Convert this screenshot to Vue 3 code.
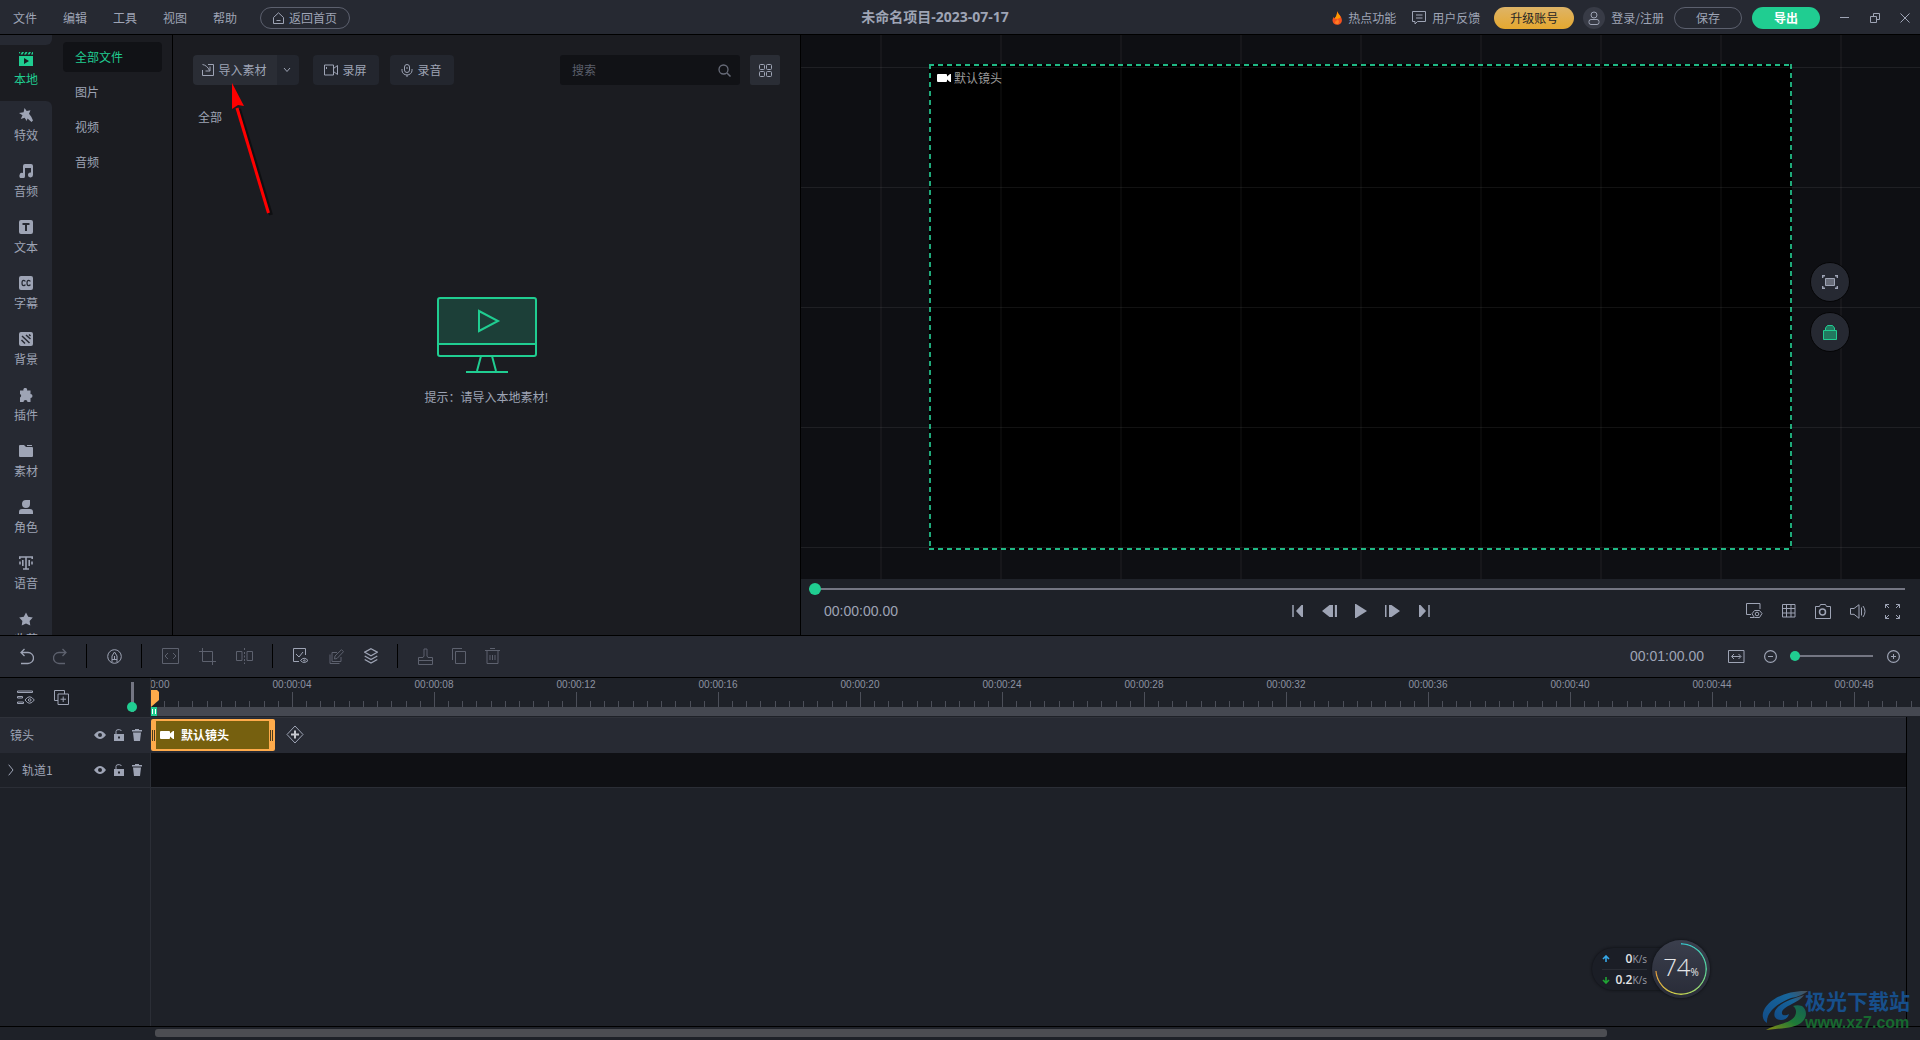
<script setup>
import { h, ref } from 'vue'

// name: [width, height, markup]
const icons = {
  home: [11, 12, '<path d="M.5 5.5 5.5.8l5 4.7v6H.5zM3.5 8.5h4"/>'],
  flame: [11, 14, '<path d="M5 .3c.6 2.2 4.7 4.600 4.900 8.600.1 2.900-2 4.900-4.600 4.900S.6 12.200.5 9.500c0-1.700.7-2.600 1.200-3.600.5.5.7 1 .8 1.600C4.300 5.700 5.300 3 5 .3z" fill="#f4511e" stroke="none"/><path d="M5 .3c.6 2.200 3 3.600 3.600 6C7 8 4 8 2.500 7.500 4.300 5.700 5.300 3 5 .3z" fill="#ff9800" stroke="none"/><path d="M5.600 8c1.800 1.500 2 5-.4 5.200-2.600 0-2.800-2.400-1-3.400.8-.5 1.300-1 1.400-1.800z" fill="#ff7b21" stroke="none"/>'],
  feedback: [14, 14, '<path d="M.5.5h13v10H5.500l-2.500 2.500v-2.500H.5zM4 4h6.500M4 7h6.500"/>'],
  user: [12, 14, '<circle cx="6" cy="4" r="3"/><rect x="1" y="8.500" width="10" height="5" rx="2"/>'],
  min: [10, 10, '<path d="M0 4.500h9"/>'],
  restore: [10, 10, '<path d="M.5 3.500h6v6h-6zM3.500 3V.5h6v6H7"/>'],
  close: [10, 10, '<path d="M.5.5l9 9M9.500.5l-9 9"/>'],
  local: [14, 14, '<path d="M0 0h1.500L0 2zM3 0h2L3.500 2.500h-2zM6.500 0h2L7 2.500H5zM10 0h2l-1.500 2.500h-2zM13.300 0H14v2.500h-2zM0 4h14v10H0zM5 6v6l5-3z" fill="currentColor" fill-rule="evenodd" stroke="none"/>'],
  effect: [14, 14, '<path d="M5.500 0l2.200 3 3.800-.8-1.500 3.500 2.300 3L14 12.500 12.500 14 8.500 10.500l-.7 2.500L5.600 9.800 1.800 10.900l1.700-3.700L0 4.900l4.600-.6z" fill="currentColor" stroke="none"/>'],
  music: [14, 14, '<path d="M4 2Q4 0 6 0h6q2 0 2 2v9a2.500 2.500 0 1 1-2-2.500V4H6v7.500A2.800 2.800 0 1 1 4 9z" fill="currentColor" stroke="none"/>'],
  text: [14, 14, '<path d="M2 0h10q2 0 2 2v10q0 2-2 2H2q-2 0-2-2V2q0-2 2-2zM3.500 3v2H6v6h2V5h2.500V3z" fill="currentColor" fill-rule="evenodd" stroke="none"/>'],
  cc: [14, 14, '<rect width="14" height="14" rx="2" fill="currentColor" stroke="none"/><path d="M6.300 5.500Q6 4.300 4.700 4.300 3 4.300 3 7t1.700 2.700Q6 9.700 6.300 8.500M11.300 5.500Q11 4.300 9.700 4.300 8 4.300 8 7t1.700 2.700q1.300 0 1.600-1.200" stroke="#262932" stroke-width="1.200"/>'],
  background: [14, 14, '<rect width="14" height="14" rx="2" fill="currentColor" stroke="none"/><path d="M3 4l7.500 7M7 3l4.500 4M2.500 8L6 11.500M10 2.500l1.500 1.500" stroke="#262932" stroke-width="1.500"/>'],
  plugin: [14, 14, '<path d="M1 2.500h3.500a1.900 1.900 0 1 1 3.500 0h3.500V6a2 2 0 1 1 0 4v4H8.500a2 2 0 0 0-4 0H1V9.500a1.900 1.900 0 0 0 0-3.500z" fill="currentColor" stroke="none"/>'],
  folder: [14, 14, '<path d="M0 2q0-1 1-1h4l2 2h6q1 0 1 1v8q0 1-1 1H1q-1 0-1-1zM8 1h5v1H8z" fill="currentColor" stroke="none"/>'],
  role: [14, 14, '<path d="M7 0h4v4a4 4 0 1 1-4-4zM3 9h8q3 0 3 3v2H0v-2q0-3 3-3z" fill="currentColor" stroke="none"/>'],
  voice: [14, 14, '<path d="M.8 3V1h12.400v2M7 1v12M4 13h6M3.800 4v6M10.200 4v6M1 5.500v3M13 5.500v3" stroke-width="1.600"/>'],
  star: [14, 14, '<path d="M7 .5l2.200 4.200 4.600.8-3.200 3.400.7 4.700L7 11.500l-4.300 2.100.7-4.700L.2 5.500l4.600-.8z" fill="currentColor" stroke="none"/>'],
  importIn: [12, 12, '<path d="M6 .5h5.500v11H.5V6M.5.5C3.500 1 6 3 7.500 6.500M8 2.500v4.500H3.500"/>'],
  caret: [8, 6, '<path d="M1 1l3 3.500L7 1"/>'],
  camera: [14, 12, '<path d="M.5 1h9v10h-9zM9.500 4.500l4-3v9l-4-3M2.500 3v2"/>'],
  mic: [12, 13, '<rect x="3.500" y=".5" width="5" height="8" rx="2.500"/><path d="M1 5v1.500a5 4.500 0 0 0 10 0V5M6 11v2M6 3v2"/>'],
  search: [13, 13, '<circle cx="5.500" cy="5.500" r="4.500" stroke-width="1.300"/><path d="M9 9l3.500 3.500" stroke-width="1.500"/>'],
  grid4: [13, 13, '<rect x=".5" y=".5" width="5" height="5" rx="1"/><rect x="7.500" y=".5" width="5" height="5" rx="1"/><rect x=".5" y="7.500" width="5" height="5" rx="1"/><rect x="7.500" y="7.500" width="5" height="5" rx="1"/>'],
  monitor: [100, 76, '<path d="M1 1h98v46H1z" fill="#1c3f38" stroke="none"/><rect x="1" y="1" width="98" height="58" rx="2" stroke-width="2"/><path d="M1 47h98M42 14v20l19-10zM44 59l-4 15M55 59l4 15M29 75h42" stroke-width="2"/>'],
  cam: [14, 10, '<path d="M0 2q0-1 1-1h8q1 0 1 1v1.500L13 1h1v8h-1l-3-2.500V8q0 1-1 1H1Q0 9 0 8z" fill="currentColor" stroke="none"/>'],
  fitBox: [16, 14, '<path d="M3.500 3.500h9v7h-9z" fill="#686c78"/><path d="M.7 3V.7H3M13 .7h2.300V3M15.300 11v2.300H13M3 13.300H.7V11" stroke-width="1.400"/>'],
  padlock: [14, 15, '<path d="M.5 5.500h13v9H.5zM2.500 5.500V3l2-2.500h5l2 2.500v2.500" fill="#22795f" stroke="#20cd91"/>'],
  first: [12, 14, '<path d="M1 1v12" stroke-width="1.500"/><path d="M11 1v12H9.500L4 7l5.500-6z" fill="currentColor" stroke="none"/>'],
  prev: [15, 14, '<path d="M0 7l7.500-6H11v12H7.500zM12.500 1H15v12h-2.500z" fill="currentColor" stroke="none"/><path d="M12 1v12" stroke="#1e2128" stroke-width="1.400"/>'],
  play: [12, 14, '<path d="M0 0h1l11 7-11 7H0z" fill="currentColor" stroke="none"/>'],
  next: [15, 14, '<path d="M0 1h1.500v12H0zM4 1h2.500L15 7l-8.500 6H4z" fill="currentColor" stroke="none"/>'],
  last: [12, 14, '<path d="M11 1v12" stroke-width="1.500"/><path d="M1 1v12h1.500L8 7 2.500 1z" fill="currentColor" stroke="none"/>'],
  screenSet: [17, 16, '<path d="M5 11.500H.5V.5h13.500V6M4 14.500h4"/><path d="M8.500 7.500h5l2.500 3-2.500 4h-5L6 10.800z"/><circle cx="11" cy="11" r="1.800"/>'],
  gridLines: [14, 14, '<path d="M.5.5h12.500v12.500H.5zM4.500.5v12.500M9 .5v12.500M.5 4.500h12.500M.5 9h12.500"/>'],
  photo: [16, 15, '<path d="M.5 2.500h4l1-2h5l1 2h4v12H.5z"/><circle cx="7.500" cy="8" r="3" stroke-width="1.500"/>'],
  speaker: [16, 15, '<path d="M.5 4.500H4L9 .7v13.600l-5-4H.5zM11.500 3.500v8M13 2q4 5.500 0 11"/>'],
  expand: [15, 15, '<path d="M.5 4V.5H4M.5.5 4 4M11 .5h3.500V4M14.500.5 11 4M14.500 11v3.500H11M14.500 14.500 11 11M4 14.500H.5V11M.5 14.500 4 11"/>'],
  undo: [14, 17, '<path d="M1 4.500h7a5.500 5.500 0 0 1 0 11H1M4.500 1L1 4.500 4.500 8" stroke-width="1.300"/>'],
  redo: [14, 17, '<path d="M13 4.500H6a5.500 5.500 0 0 0 0 11h6M9.500 1L13 4.500 9.500 8" stroke-width="1.300"/>'],
  auto: [15, 15, '<circle cx="7.500" cy="7.500" r="6.800"/><path d="M5 13V7l2.500-4L10 7v6M5 10.500h5M7.500 7v3"/>'],
  code: [17, 16, '<path d="M.5.5h16v15H.5zM6 5L3 8l3 3M11 5l3 3-3 3"/>'],
  crop: [17, 17, '<path d="M0 3.500h13.500V17M3.500 0v13.500H17"/>'],
  split: [17, 16, '<path d="M6 3.500H.5v9H6zM11 3.500h5.500v9H11zM8.500 0v2M8.500 4v2M8.500 7.500v2M8.500 11v2M8.500 14.500V16"/>'],
  checkEye: [16, 16, '<path d="M12.500 7V.5H.5v13H6M3 6l3 3 4-5"/><path d="M7.500 12.500q3.500-4.500 7.500 0-4 4-7.500 0z"/><circle cx="11.300" cy="12.500" r=".7"/>'],
  edit: [15, 15, '<path d="M8 3.500H3v9h9V8M1 5.500v9h9.500M5.500 10l.5-3L12.500.7l2 2L8 9.500z"/>'],
  layers: [14, 16, '<path d="M7 .7l6.300 3.500L7 7.700.7 4.200zM.7 8L7 11.500 13.300 8M.7 11.500L7 15l6.300-3.500" stroke-width="1.300"/>'],
  stamp: [15, 17, '<path d="M.5 16.500v-7H5L6 8V1h3v7l1 1.500h4.500v7zM.5 12.500h14"/>'],
  copy: [14, 16, '<path d="M3.500 3.500h10v12h-10zM.5 12V.5H10"/>'],
  trashLine: [15, 16, '<path d="M0 2.500h15M5 .5h5M2 3v12.500h11V3M5 7v5M7.500 7v5M10 7v5"/>'],
  fitWidth: [17, 13, '<path d="M.5.5h15.500v12H.5zM4 6.500h8.500M6 4L3.500 6.500 6 9M10.500 4 13 6.500 10.500 9"/>'],
  minus: [13, 13, '<circle cx="6.500" cy="6.500" r="5.900" stroke-width="1.200"/><path d="M4 6.500h5"/>'],
  plus: [13, 13, '<circle cx="6.500" cy="6.500" r="5.900" stroke-width="1.200"/><path d="M4 6.500h5M6.500 4v5"/>'],
  trackSet: [18, 15, '<path d="M.5 1h15v1.500H.5zM.5 6.500h5v1.500h-5zM.5 12h6v1.500h-6zM8 10q4.500-6.500 9.300 0-4.800 6.500-9.300 0z"/><circle cx="12.700" cy="10" r="1.300"/>'],
  addTrack: [15, 15, '<path d="M4 4h10.500v10.500H4zM4 10.500H.5V.5h10V4M9.200 6.500v5.500M6.500 9.200H12"/>'],
  eye: [12, 8, '<path d="M0 4q6-8 12 0-6 8-12 0zM6 2a2 2 0 1 0 0 4 2 2 0 0 0 0-4z" fill="currentColor" fill-rule="evenodd" stroke="none"/>'],
  unlock: [10, 12, '<path d="M0 5h10v7H0zM4 7.500v2h2v-2z" fill="currentColor" fill-rule="evenodd" stroke="none"/><path d="M2 5V2.500Q2 .7 4 .7h1.500Q7 .7 7.300 2"/>'],
  trash: [10, 12, '<path d="M3 0h4v1h3v1.500H0V1h3zM1 3.500h8L8 12H2z" fill="currentColor" stroke="none"/>'],
  chevron: [6, 12, '<path d="M.7.7L5 6 .7 11.300"/>'],
  playhead: [8, 17, '<path d="M0 0h6l2 2v8l-8 7z" fill="#ffab4b" stroke="none"/>'],
  addClip: [18, 19, '<path d="M9 1l8 8.500L9 18 1 9.500z"/><path d="M9 5.500v8M5 9.500h8" stroke="#c6c8ce" stroke-width="2"/>'],
  up: [8, 7, '<path d="M4 7V1M1 4l3-3 3 3" stroke="#35a7e8" stroke-width="1.600"/>'],
  down: [8, 7, '<path d="M4 0v6M1 3l3 3 3-3" stroke="#20a534" stroke-width="1.600"/>'],
}

const Icon = ({ name }) => {
  const [w, ht, body] = icons[name]
  return h('svg', {
    class: 'icon', width: w, height: ht, viewBox: `0 0 ${w} ${ht}`,
    fill: 'none', stroke: 'currentColor', 'aria-hidden': 'true', innerHTML: body,
  })
}
Icon.props = ['name']

const menus = ['文件', '编辑', '工具', '视图', '帮助']
const modules = [
  ['local', '本地'], ['effect', '特效'], ['music', '音频'], ['text', '文本'],
  ['cc', '字幕'], ['background', '背景'], ['plugin', '插件'], ['folder', '素材'],
  ['role', '角色'], ['voice', '语音'], ['star', '收藏'],
]
const folders = ['全部文件', '图片', '视频', '音频']
const transport = [['first', '第一帧'], ['prev', '上一帧'], ['play', '播放'], ['next', '下一帧'], ['last', '最后一帧']]
const viewTools = [['screenSet', '画质'], ['gridLines', '网格'], ['photo', '截图'], ['speaker', '音量'], ['expand', '全屏']]
const toolGroups = [
  [['undo', '撤销', true], ['redo', '重做', false]],
  [['auto', '自动', true]],
  [['code', '代码', false], ['crop', '裁剪', false], ['split', '分割', false]],
  [['checkEye', '可见', true], ['edit', '编辑', false], ['layers', '图层', true]],
  [['stamp', '格式刷', false], ['copy', '复制', false], ['trashLine', '删除', false]],
]
const trackTools = [['eye', '显示'], ['unlock', '锁定'], ['trash', '删除']]
const marks = Array.from({ length: 14 }, (_, i) => '00:00:' + String(i * 4).padStart(2, '0'))
const minor = [0, 14, 28, 43, 57, 85, 99, 113, 128]

const keyword = ref('')
const position = ref(0)
const zoom = ref(0)
const trackHeight = ref(0)
</script>

<template>
  <div class="app">
    <header class="titlebar">
      <nav class="menus">
        <button v-for="m in menus" :key="m" class="menu">{{ m }}</button>
        <button class="pill back"><Icon name="home" />返回首页</button>
      </nav>
      <h1 class="project">未命名项目-2023-07-17</h1>
      <div class="account">
        <a href="#" class="hot"><Icon name="flame" />热点功能</a>
        <a href="#" class="feedback"><Icon name="feedback" />用户反馈</a>
        <button class="pill upgrade">升级账号</button>
        <a href="#" class="login"><span class="avatar"><Icon name="user" /></span>登录/注册</a>
        <button class="pill save">保存</button>
        <button class="pill export">导出</button>
        <div class="window">
          <button aria-label="最小化"><Icon name="min" /></button>
          <button aria-label="还原"><Icon name="restore" /></button>
          <button aria-label="关闭"><Icon name="close" /></button>
        </div>
      </div>
    </header>

    <main class="workspace">
      <nav class="modules">
        <div class="cap"></div>
        <button v-for="([icon, label], i) in modules" :key="icon" class="module" :class="{ active: i === 0, after: i === 1 }">
          <Icon :name="icon" /><span>{{ label }}</span>
        </button>
      </nav>
      <nav class="folders">
        <button v-for="(f, i) in folders" :key="f" class="folder" :class="{ active: i === 0 }">{{ f }}</button>
      </nav>

      <section class="media">
        <div class="media-bar">
          <div class="import">
            <button class="import-main"><Icon name="importIn" />导入素材</button>
            <button class="import-more" aria-label="更多"><Icon name="caret" /></button>
          </div>
          <button class="record"><Icon name="camera" />录屏</button>
          <button class="record voice"><Icon name="mic" />录音</button>
          <label class="search">
            <input v-model="keyword" type="text" placeholder="搜索" aria-label="搜索" />
            <Icon name="search" />
          </label>
          <button class="layout" aria-label="网格视图"><Icon name="grid4" /></button>
        </div>
        <p class="crumb">全部</p>
        <div class="empty">
          <Icon name="monitor" />
          <p>提示：请导入本地素材!</p>
        </div>
      </section>

      <section class="preview">
        <div class="stage">
          <div class="canvas">
            <p class="scene"><Icon name="cam" />默认镜头</p>
          </div>
          <div class="side">
            <button aria-label="适应"><Icon name="fitBox" /></button>
            <button aria-label="锁定"><Icon name="padlock" /></button>
          </div>
        </div>
        <div class="player">
          <input v-model="position" class="range progress" type="range" min="0" max="100" aria-label="播放进度" />
          <div class="controls">
            <time class="time">00:00:00.00</time>
            <div class="transport">
              <button v-for="[icon, label] in transport" :key="icon" :aria-label="label"><Icon :name="icon" /></button>
            </div>
            <div class="view-tools">
              <button v-for="[icon, label] in viewTools" :key="icon" :aria-label="label"><Icon :name="icon" /></button>
            </div>
          </div>
        </div>
      </section>
    </main>

    <div class="toolbar">
      <div v-for="(group, g) in toolGroups" :key="g" class="tool-group">
        <button v-for="[icon, label, on] in group" :key="icon" :aria-label="label" :class="{ off: !on }"><Icon :name="icon" /></button>
      </div>
      <div class="zoom">
        <time class="time">00:01:00.00</time>
        <button aria-label="适应宽度"><Icon name="fitWidth" /></button>
        <button aria-label="缩小"><Icon name="minus" /></button>
        <input v-model="zoom" class="range scale" type="range" min="0" max="100" aria-label="缩放" />
        <button aria-label="放大"><Icon name="plus" /></button>
      </div>
    </div>

    <section class="timeline">
      <div class="ruler-row">
        <div class="head ruler-head">
          <button aria-label="轨道设置"><Icon name="trackSet" /></button>
          <button aria-label="添加轨道"><Icon name="addTrack" /></button>
          <input v-model="trackHeight" class="range upright" type="range" min="0" max="100" aria-label="轨道高度" />
        </div>
        <div class="ruler">
          <div class="marks">
            <div v-for="m in marks" :key="m" class="mark">
              <span>{{ m }}</span>
              <svg width="142" height="15" aria-hidden="true">
                <path v-for="x in minor" :key="x" :d="`M${x}.5 9v6`" stroke="#4c4f59" />
                <path d="M71.500 0v15" stroke="#4c4f59" />
              </svg>
            </div>
          </div>
          <div class="span"><i class="marker"></i></div>
          <Icon name="playhead" class="playhead" />
        </div>
      </div>

      <div class="tracks">
        <div class="track scenes">
          <div class="head">
            <span class="name">镜头</span>
            <button v-for="[icon, label] in trackTools" :key="icon" :aria-label="label"><Icon :name="icon" /></button>
          </div>
          <div class="lane">
            <div class="clip"><Icon name="cam" />默认镜头</div>
            <button class="add" aria-label="添加镜头"><Icon name="addClip" /></button>
          </div>
        </div>
        <div class="track media-track">
          <div class="head">
            <button class="open" aria-label="展开"><Icon name="chevron" /></button>
            <span class="name">轨道1</span>
            <button v-for="[icon, label] in trackTools" :key="icon" :aria-label="label"><Icon :name="icon" /></button>
          </div>
          <div class="lane"></div>
        </div>
        <div class="blank"><div class="head"></div></div>
      </div>
      <div class="scroll"><div class="thumb"></div></div>
    </section>

    <svg class="pointer" width="60" height="140" viewBox="0 0 60 140" aria-hidden="true">
      <path d="M17 25L49 131" stroke="#000" stroke-opacity=".45" stroke-width="4" transform="translate(2 1)" />
      <path d="M17 25L48.500 130" stroke="#f00" stroke-width="3" />
      <path d="M12 0l12 23-6-1-6 4z" fill="#f00" />
    </svg>

    <aside class="monitor">
      <div class="speeds">
        <p><Icon name="up" /><b>0</b><small>K/s</small></p>
        <p><Icon name="down" /><b>0.2</b><small>K/s</small></p>
      </div>
      <div class="gauge">
        <span>74<small>%</small></span>
      </div>
    </aside>

    <aside class="brand">
      <svg width="48" height="42" viewBox="0 0 48 42" aria-hidden="true">
        <defs>
          <linearGradient id="swirlBlue" x1="0" y1="1" x2="1" y2="0"><stop offset="0" stop-color="#124c88" /><stop offset=".7" stop-color="#17659b" /><stop offset="1" stop-color="#4b4f55" /></linearGradient>
          <linearGradient id="swirlGreen" x1="0" y1="1" x2="1" y2="0"><stop offset="0" stop-color="#8a8c12" /><stop offset=".5" stop-color="#1d7a38" /><stop offset="1" stop-color="#145f56" /></linearGradient>
        </defs>
        <path d="M46 1C24 0 4 10 1 23c-1 5 1 8 4 10-1-10 9-19 24-25C36 7 42 4 46 1z" fill="url(#swirlBlue)" />
        <path d="M42 5c-8 3-25 7-29 16-2 6 1 9 6 9 4 0 7-2 8-6-3 2-8 2-7-2 1-6 17-9 22-17z" fill="url(#swirlBlue)" />
        <path d="M31 16c3 2 4 6 2 10-5 8-19 8-29 14 14-2 30-1 37-9 5-6 3-12-1-15-3-1-6-1-9 0z" fill="url(#swirlGreen)" />
      </svg>
      <div><strong>极光下载站</strong><em>www.xz7.com</em></div>
    </aside>
  </div>
</template>

<style>
body { background: #1e2128; }
</style>

<style scoped>
.app {
  --line: #000;
  --bar: #262932;
  --panel: #1b1c21;
  --deep: #1e2128;
  --fg: #9ea4b5;
  --green: #20cd91;
  position: relative;
  display: grid;
  grid-template-columns: minmax(0, 1fr);
  grid-template-rows: 35px minmax(0, 601fr) 42px minmax(0, 362fr);
  height: 100vh;
  overflow: hidden;
  background: var(--deep);
  color: var(--fg);
  font: 12px/16px "Noto Sans CJK SC", sans-serif;
}
.app *, .app *::before, .app *::after { box-sizing: border-box; }
p, h1 { margin: 0; }
button { margin: 0; padding: 0; border: 0; background: none; color: inherit; font: inherit; display: flex; align-items: center; justify-content: center; flex: none; }
a { color: inherit; text-decoration: none; display: flex; align-items: center; flex: none; }
.icon { display: block; flex: none; }

.titlebar { display: grid; grid-template-columns: 1fr auto 1fr; align-items: center; background: var(--bar); border-bottom: 1px solid var(--line); }
.menus, .account { display: flex; align-items: center; }
.menus { padding-top: 2px; }
.menu { width: 50px; height: 24px; }
.pill { height: 22px; border: 1px solid #5c606e; border-radius: 11px; }
.back { width: 90px; gap: 5px; margin-left: 10px; }
.project { font: bold 14px/20px "Open Sans", "Noto Sans CJK SC", sans-serif; margin-right: 50px; }
.account { justify-content: flex-end; padding-top: 2px; padding-right: 10px; }
.hot { gap: 5px; margin-right: 16px; }
.feedback { gap: 6px; margin-right: 14px; }
.upgrade { width: 80px; border: 0; background: linear-gradient(#deb467, #e5a82f); color: #252525; margin-right: 9px; }
.login { gap: 6px; margin-right: 10px; }
.avatar { display: flex; align-items: center; justify-content: center; width: 22px; height: 22px; border-radius: 50%; background: #383b46; }
.save { width: 68px; margin-right: 10px; }
.export { width: 68px; border: 0; background: var(--green); color: #fff; font-weight: bold; margin-right: 20px; }
.window { display: flex; gap: 20px; }

.workspace { display: grid; grid-template-columns: 52px 121px minmax(0, 628fr) minmax(0, 1119fr); min-height: 0; border-bottom: 1px solid var(--line); }
.modules { background: var(--panel); overflow: hidden; display: flex; flex-direction: column; }
.cap { flex: none; height: 10px; background: var(--bar); border-bottom-right-radius: 6px; }
.module { flex-direction: column; justify-content: flex-start; gap: 5px; width: 100%; height: 56px; padding-top: 7px; background: var(--bar); }
.module.active { background: var(--panel); color: var(--green); }
.module.after { border-top-right-radius: 6px; }
.folders { display: flex; flex-direction: column; gap: 5px; padding: 7px 10px 0 11px; background: var(--panel); border-right: 1px solid var(--line); }
.folder { height: 30px; padding-left: 12px; justify-content: flex-start; border-radius: 4px; }
.folder.active { background: #111216; color: var(--green); }

.media { display: flex; flex-direction: column; background: var(--panel); border-right: 1px solid var(--line); padding: 20px 20px 0; }
.media-bar { display: flex; height: 31px; align-items: flex-start; }
.import { display: flex; border-radius: 4px; overflow: hidden; margin-right: 14px; }
.import-main { width: 84px; height: 30px; gap: 4px; padding-right: 1px; background: #2a2d35; }
.import-more { width: 22px; height: 30px; padding-right: 2px; background: #23262e; }
.record { width: 66px; height: 30px; gap: 4px; padding-right: 1px; border-radius: 4px; background: #23262e; margin-right: 11px; }
.record.voice { width: 64px; margin-right: auto; }
.search { display: flex; align-items: center; width: 180px; height: 30px; padding: 0 9px 0 12px; border-radius: 3px; background: #111216; color: #686c79; margin-right: 10px; }
.search input { flex: 1; min-width: 0; padding: 0; border: 0; outline: 0; background: none; color: var(--fg); font: inherit; }
.search input::placeholder { color: #5b5f6b; }
.layout { width: 30px; height: 30px; border-radius: 2px; background: #2a2d35; }
.crumb { padding: 23px 5px 0; }
.empty { flex: 1; display: flex; flex-direction: column; align-items: center; gap: 16px; padding-top: 172px; color: var(--green); }
.empty p { color: var(--fg); }

.preview { display: flex; flex-direction: column; min-width: 0; }
.stage { position: relative; flex: 1; min-height: 0; display: flex; align-items: center; justify-content: center; background: #0e0f13; }
.stage::after {
  content: ""; position: absolute; inset: 0; pointer-events: none;
  background-image: linear-gradient(#ffffff12 1px, transparent 1px), linear-gradient(90deg, #ffffff12 1px, transparent 1px);
  background-size: 120px 120px;
  background-position: calc(50% + 60px) calc(50% + 60px);
}
.canvas {
  height: calc(100% - 58px); aspect-ratio: 863 / 486; padding: 7px 8px;
  --x: repeating-linear-gradient(90deg, #1fb884 0 5px, transparent 5px 9px);
  --y: repeating-linear-gradient(#1fa97a 0 5px, transparent 5px 9px);
  background: var(--x) top / 100% 2px no-repeat, var(--x) bottom / 100% 2px no-repeat, var(--y) left / 2px 100% no-repeat, var(--y) right / 2px 100% no-repeat, #000;
}
.scene { display: flex; align-items: center; gap: 3px; color: #9a9a9a; line-height: 14px; }
.scene .icon { color: #fff; }
.side { position: absolute; right: 70px; top: 50%; transform: translateY(-50%); display: flex; flex-direction: column; gap: 10px; z-index: 1; }
.side button { width: 40px; height: 40px; border-radius: 50%; border: 1px solid #050506; background: var(--bar); }
.player { height: 56px; padding: 4px 15px 0 8px; background: var(--deep); }
.controls { display: grid; grid-template-columns: 1fr auto 1fr; align-items: center; height: 32px; }
.time { font: 14px/16px "Liberation Sans", sans-serif; }
.controls .time { padding-left: 15px; }
.transport { display: flex; align-items: center; gap: 18px; margin-left: 7px; }
.view-tools { display: flex; align-items: center; justify-content: flex-end; gap: 19px; padding-right: 5px; }

.range { appearance: none; margin: 0; padding: 0; background: none; display: block; }
.range::-webkit-slider-runnable-track { height: 2px; background: #747683; }
.range::-webkit-slider-thumb { appearance: none; width: 12px; height: 12px; margin-top: -5px; border-radius: 50%; background: var(--green); }
.progress { width: 100%; height: 12px; }
.scale { width: 83px; height: 12px; }
.scale::-webkit-slider-thumb { width: 10px; height: 10px; margin-top: -4px; }
.upright { writing-mode: vertical-lr; direction: rtl; width: 10px; height: 30px; }
.upright::-webkit-slider-runnable-track { width: 3px; height: 100%; }
.upright::-webkit-slider-thumb { width: 10px; height: 10px; margin: 0 0 0 -4px; }

.toolbar { display: flex; align-items: center; background: var(--bar); border-bottom: 1px solid var(--line); padding: 0 20px 1px 0; }
.tool-group { display: flex; align-items: center; gap: 19px; padding: 0 19px 0 20px; height: 24px; border-right: 1px solid var(--line); }
.tool-group:nth-child(3) { gap: 20px; }
.tool-group:nth-child(4) { gap: 20px; }
.tool-group:nth-child(5) { border: 0; }
.off { color: #5d616e; }
.zoom { display: flex; align-items: center; margin-left: auto; }
.zoom .time { margin-right: 24px; }
.zoom button { margin-right: 19px; }
.zoom button:nth-of-type(2) { margin-right: 13px; }
.zoom button:nth-of-type(3) { margin: 0 0 0 14px; }

.timeline { display: flex; flex-direction: column; min-height: 0; }
.head { flex: none; display: flex; align-items: center; width: 151px; border-right: 1px solid #2b2e36; gap: 8px; padding: 0 8px 0 10px; }
.ruler-row { display: flex; height: 39px; }
.ruler-head { gap: 19px; padding: 0 13px 1px 17px; }
.upright { margin-left: auto; }
.ruler { position: relative; flex: 1; min-width: 0; overflow: hidden; }
.marks { display: flex; margin-left: -72px; height: 29px; }
.mark { flex: none; width: 142px; display: flex; flex-direction: column; align-items: center; justify-content: flex-end; font: 10px/14px "Liberation Sans", sans-serif; color: #8d92a1; }
.mark svg { display: block; }
.span { height: 9px; background: #454851; }
.marker { display: block; width: 6px; height: 9px; border: solid var(--green); border-width: 2px 1px; background: linear-gradient(90deg, #fff 1px, var(--green) 1px 3px, #fff 3px); }
.playhead { position: absolute; left: 0; top: 12px; }
.tracks { flex: 1; min-height: 0; display: flex; flex-direction: column; margin-right: 13px; border-right: 1px solid var(--line); }
.track { flex: none; display: flex; }
.name { margin-right: auto; }
.scenes { height: 36px; padding-bottom: 2px; background: #272a33; border-top: 1px solid #2f323a; }
.media-track { height: 35px; border-bottom: 1px solid #2b2e36; }
.media-track .head { padding-left: 8px; padding-bottom: 1px; }
.lane { flex: 1; display: flex; align-items: center; }
.media-track .lane { background: #0f1014; }
.clip {
  display: flex; align-items: center; gap: 7px; width: 124px; height: 32px; padding-left: 4px;
  border: solid #ffab4b; border-width: 2px 6px 2px 5px; border-radius: 2px;
  background: #76600f; color: #fff; font-weight: bold; position: relative;
}
.clip::before, .clip::after { content: ""; position: absolute; top: 9px; width: 3px; height: 11px; border: solid #4a3b1c; border-width: 0 1px; }
.clip::before { left: -4px; }
.clip::after { right: -4px; }
.add { margin-left: 11px; }
.blank { flex: 1; display: flex; }
.scroll { flex: none; height: 14px; padding: 2px 313px 0 155px; border-top: 1px solid var(--line); }
.thumb { height: 8px; border-radius: 3px; background: #4c4d52; }

.pointer { position: absolute; left: 220px; top: 83px; fill: none; pointer-events: none; }

.monitor { position: absolute; right: 210px; bottom: 42px; display: flex; align-items: center; font-family: "Open Sans", sans-serif; color: #e4e5e8; }
.speeds { width: 74px; height: 42px; margin-right: -14px; padding: 0 19px 0 10px; border-radius: 21px 0 0 21px; background: #1b1e26; box-shadow: 0 0 3px #0b0c10; }
.speeds p { display: flex; align-items: center; height: 21px; }
.speeds p + p { border-top: 1px solid #292c34; }
.speeds b { margin-left: auto; font-size: 12px; font-weight: 600; }
.speeds small, .gauge small { font-size: 10px; }
.speeds small { color: #9a9da6; }
.gauge { position: relative; width: 58px; height: 58px; border-radius: 50%; display: flex; align-items: center; justify-content: center; background: linear-gradient(#3b3f4d, #282b37); box-shadow: 0 0 3px #0b0c10; }
.gauge::before {
  content: ""; position: absolute; inset: 3px; border-radius: 50%;
  background: conic-gradient(#35c3cb, #56d39b 25%, #c7d44e 50%, #e49a3b 74%, transparent 74%);
  mask: radial-gradient(closest-side, transparent 24px, #000 25px);
}
.gauge span { font-size: 24px; font-weight: 300; line-height: 30px; }
.gauge small { font-weight: 400; }

.brand { position: absolute; right: 10px; bottom: 8px; display: flex; align-items: flex-end; }
.brand svg { margin-right: -5px; }
.brand strong, .brand em { display: block; font-style: normal; font-weight: bold; }
.brand strong { font-size: 21px; line-height: 24px; padding-bottom: 2px; color: #174f8b; }
.brand em { font: bold 16px/18px "Liberation Sans", sans-serif; color: #17692f; }
</style>
